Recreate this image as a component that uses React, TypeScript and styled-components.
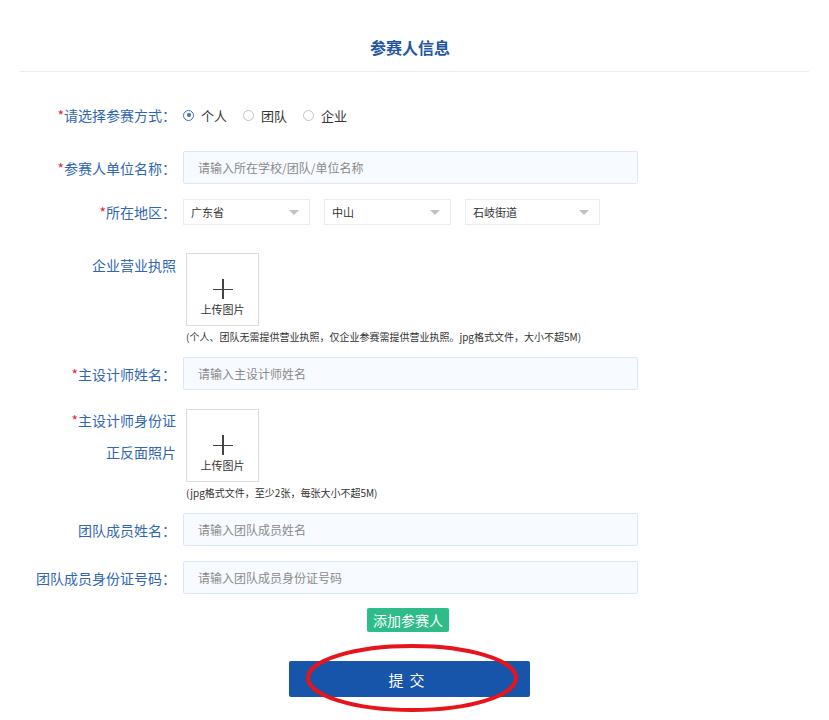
import React from 'react'
import styled, { createGlobalStyle } from 'styled-components'

const GlobalStyle = createGlobalStyle`
  html, body {
    margin: 0;
    padding: 0;
    background: #fff;
  }
  body {
    font-family: "Noto Sans CJK SC", "Noto Sans", "Liberation Sans", sans-serif;
  }
`

const Page = styled.div`
  width: 829px;
  min-height: 720px;
  position: relative;
  padding: 0 20px;
  box-sizing: border-box;
`

const Title = styled.h2`
  margin: 0;
  padding: 35px 9px 0 0;
  height: 72px;
  box-sizing: border-box;
  text-align: center;
  font-size: 16px;
  line-height: 24px;
  font-weight: 700;
  color: #2356a3;
  border-bottom: 1px solid #ececec;
`

const Form = styled.div`
  display: flex;
  flex-direction: column;
`

const Row = styled.div<{ $top: number; $align?: string }>`
  display: grid;
  grid-template-columns: 156px 1fr;
  column-gap: 7px;
  align-items: ${(p) => p.$align || 'center'};
  margin-top: ${(p) => p.$top}px;
`

const Label = styled.div<{ $lh?: number; $shift?: number }>`
  text-align: right;
  font-size: 14px;
  line-height: ${(p) => p.$lh || 20}px;
  margin-top: ${(p) => p.$shift || 0}px;
  color: #3066b3;
  white-space: nowrap;
`

const Star = styled.span`
  color: #e8262c;
`

const Radios = styled.div`
  display: flex;
  align-items: center;
  gap: 16px;
`

const RadioItem = styled.label`
  display: flex;
  align-items: center;
  gap: 7px;
  font-size: 13px;
  color: #333;
`

const RadioDot = styled.span<{ $on?: boolean }>`
  width: 9px;
  height: 9px;
  border-radius: 50%;
  border: 1px solid ${(p) => (p.$on ? '#3a6fc4' : '#c4c4c4')};
  position: relative;
  &::after {
    content: '';
    display: ${(p) => (p.$on ? 'block' : 'none')};
    position: absolute;
    left: 2.5px;
    top: 2.5px;
    width: 4px;
    height: 4px;
    border-radius: 50%;
    background: #3a6fc4;
  }
`

const TextInput = styled.div`
  width: 455px;
  height: 33px;
  box-sizing: border-box;
  border: 1px solid #dbe7fa;
  border-radius: 2px;
  background: #f7faff;
  display: flex;
  align-items: center;
  padding-left: 14px;
  font-size: 12px;
  color: #8a8a8a;
`

const Selects = styled.div`
  display: flex;
  gap: 14px;
`

const Select = styled.div<{ $w: number }>`
  width: ${(p) => p.$w}px;
  height: 26px;
  box-sizing: border-box;
  border: 1px solid #ececec;
  display: flex;
  align-items: center;
  justify-content: space-between;
  padding: 0 10px 0 7px;
  font-size: 11px;
  color: #333;
  &::after {
    content: '';
    border-left: 5px solid transparent;
    border-right: 5px solid transparent;
    border-top: 5px solid #c2c2c2;
  }
`

const UploadCol = styled.div`
  display: flex;
  flex-direction: column;
  padding-left: 3px;
`

const Upload = styled.div`
  width: 73px;
  height: 73px;
  box-sizing: border-box;
  border: 1px solid #dcdcdc;
  display: flex;
  flex-direction: column;
  align-items: center;
  padding-top: 25px;
`

const Plus = styled.div`
  width: 20px;
  height: 20px;
  position: relative;
  &::before,
  &::after {
    content: '';
    position: absolute;
    background: #444;
  }
  &::before {
    left: 0;
    right: 0;
    top: 9.5px;
    height: 1.5px;
  }
  &::after {
    top: 0;
    bottom: 0;
    left: 9.5px;
    width: 1.5px;
  }
`

const UploadText = styled.div`
  font-size: 11px;
  color: #333;
  margin-top: 2px;
`

const Note = styled.div`
  font-size: 10px;
  color: #333;
  margin-top: 3px;
  white-space: nowrap;
`

const AddButton = styled.button`
  align-self: flex-start;
  margin: 14px 0 0 347px;
  height: 24px;
  padding: 0 6px;
  border: 0;
  border-radius: 2px;
  background: #2dbc8a;
  color: #fff;
  font-size: 14px;
  font-family: inherit;
`

const SubmitWrap = styled.div`
  position: relative;
  align-self: flex-start;
  margin: 29px 0 0 269px;
`

const SubmitButton = styled.button`
  width: 241px;
  height: 36px;
  border: 0;
  border-radius: 2px;
  background: #1655a9;
  color: #fff;
  font-size: 15px;
  letter-spacing: 6px;
  font-family: inherit;
`

const Circle = styled.svg`
  position: absolute;
  left: 16px;
  top: -18px;
  pointer-events: none;
`

export default function App() {
  return (
    <Page>
      <GlobalStyle />
      <Title>参赛人信息</Title>
      <Form>
        <Row $top={33}>
          <Label>
            <Star>*</Star>请选择参赛方式：
          </Label>
          <Radios>
            <RadioItem>
              <RadioDot $on />
              个人
            </RadioItem>
            <RadioItem>
              <RadioDot />
              团队
            </RadioItem>
            <RadioItem>
              <RadioDot />
              企业
            </RadioItem>
          </Radios>
        </Row>
        <Row $top={26}>
          <Label>
            <Star>*</Star>参赛人单位名称：
          </Label>
          <TextInput>请输入所在学校/团队/单位名称</TextInput>
        </Row>
        <Row $top={15}>
          <Label>
            <Star>*</Star>所在地区：
          </Label>
          <Selects>
            <Select $w={127}>广东省</Select>
            <Select $w={127}>中山</Select>
            <Select $w={135}>石岐街道</Select>
          </Selects>
        </Row>
        <Row $top={28} $align="start">
          <Label $lh={24}>企业营业执照</Label>
          <UploadCol>
            <Upload>
              <Plus />
              <UploadText>上传图片</UploadText>
            </Upload>
            <Note>(个人、团队无需提供营业执照，仅企业参赛需提供营业执照。jpg格式文件，大小不超5M)</Note>
          </UploadCol>
        </Row>
        <Row $top={13}>
          <Label>
            <Star>*</Star>主设计师姓名：
          </Label>
          <TextInput>请输入主设计师姓名</TextInput>
        </Row>
        <Row $top={19} $align="start">
          <Label $lh={32} $shift={-5}>
            <Star>*</Star>主设计师身份证
            <br />
            正反面照片
          </Label>
          <UploadCol>
            <Upload>
              <Plus />
              <UploadText>上传图片</UploadText>
            </Upload>
            <Note>(jpg格式文件，至少2张，每张大小不超5M)</Note>
          </UploadCol>
        </Row>
        <Row $top={13}>
          <Label>团队成员姓名：</Label>
          <TextInput>请输入团队成员姓名</TextInput>
        </Row>
        <Row $top={15}>
          <Label>团队成员身份证号码：</Label>
          <TextInput>请输入团队成员身份证号码</TextInput>
        </Row>
        <AddButton>添加参赛人</AddButton>
        <SubmitWrap>
          <SubmitButton>提交</SubmitButton>
          <Circle width="214" height="70" viewBox="0 0 214 70">
            <ellipse cx="107" cy="35" rx="104" ry="32" fill="none" stroke="#e8141c" strokeWidth="4" />
          </Circle>
        </SubmitWrap>
      </Form>
    </Page>
  )
}
